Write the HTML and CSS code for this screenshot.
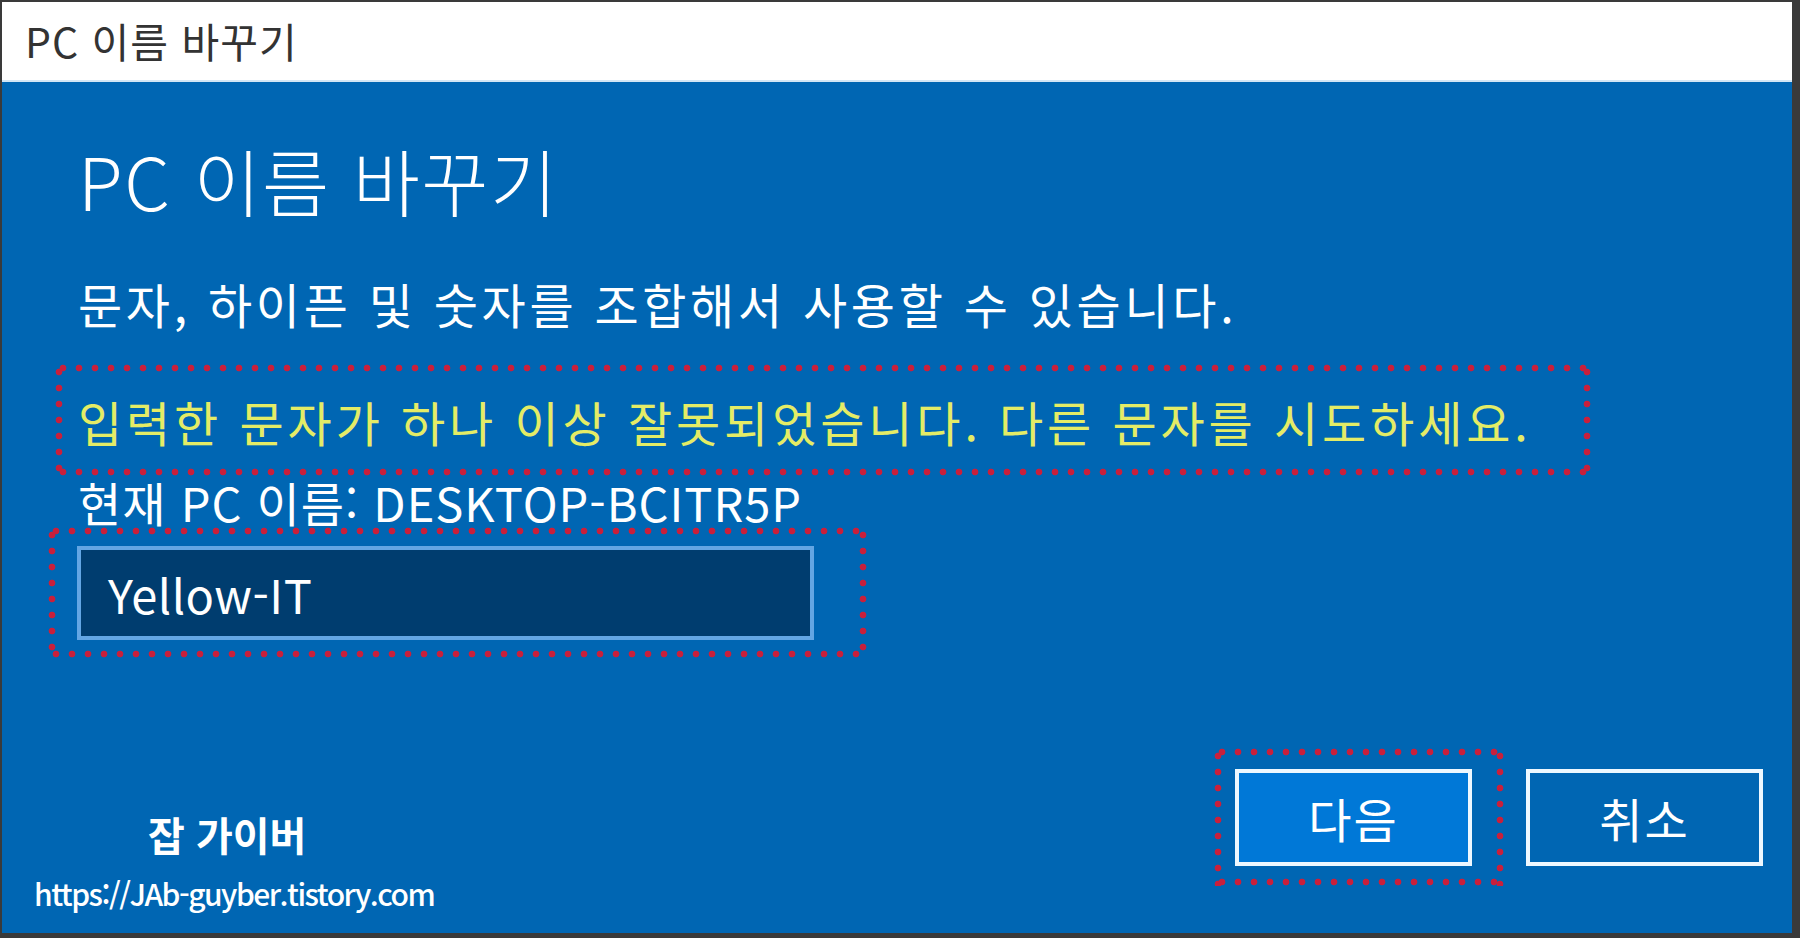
FILE: index.html
```html
<!DOCTYPE html>
<html lang="ko">
<head>
<meta charset="utf-8">
<title>PC 이름 바꾸기</title>
<link rel="stylesheet" href="styles.css">
</head>
<body>
<div class="window">
  <div class="titlebar">PC 이름 바꾸기</div>
  <div class="content">
    <h1 class="heading">PC 이름 바꾸기</h1>
    <p class="desc">문자, 하이픈 및 숫자를 조합해서 사용할 수 있습니다.</p>
    <div class="error mark">입력한 문자가 하나 이상 잘못되었습니다. 다른 문자를 시도하세요.</div>
    <p class="current">현재 PC 이름: DESKTOP-BCITR5P</p>
    <div class="input-frame mark">
      <div class="input">Yellow-IT</div>
    </div>
    <div class="footer">
      <div class="watermark">
        <div class="wm-name">잡 가이버</div>
        <div class="wm-url">https://JAb-guyber.tistory.com</div>
      </div>
      <div class="actions">
        <div class="btn-frame mark">
          <button class="btn primary">다음</button>
        </div>
        <button class="btn">취소</button>
      </div>
    </div>
  </div>
</div>
</body>
</html>
```

FILE: styles.css
```css
* { box-sizing: border-box; margin: 0; padding: 0; }
html, body { width: 1800px; height: 938px; overflow: hidden; }
body {
  background: #3a3a3a;
  font-family: "Noto Sans CJK KR", "Noto Sans", sans-serif;
  padding: 2px 8px 5px 2px;
}
.window {
  width: 1790px;
  height: 931px;
  background: #0066b3;
  display: flex;
  flex-direction: column;
}
.titlebar {
  height: 80px;
  flex: none;
  background: #fff;
  border-bottom: 2px solid #d3e6f5;
  padding: 18px 0 0 23px;
  font-size: 41px;
  line-height: 1;
  color: #333;
  letter-spacing: 1px;
}
.content {
  flex: 1;
  padding: 61px 29px 0 76px;
  color: #fff;
  display: flex;
  flex-direction: column;
  align-items: flex-start;
}
.heading {
  font-size: 73px;
  font-weight: 300;
  line-height: 1;
  letter-spacing: 1.5px;
}
.desc {
  font-size: 48px;
  line-height: 1;
  margin-top: 63px;
  letter-spacing: 3.7px;
}
.mark {
  background:
    radial-gradient(circle at center, #c8203c 0 3px, transparent 3.7px) 0 0 / 16px 8px repeat-x,
    radial-gradient(circle at center, #c8203c 0 3px, transparent 3.7px) 0 100% / 16px 8px repeat-x,
    radial-gradient(circle at center, #c8203c 0 3px, transparent 3.7px) 0 0 / 8px 16px repeat-y,
    radial-gradient(circle at center, #c8203c 0 3px, transparent 3.7px) 100% 0 / 8px 16px repeat-y;
}
.error {
  margin: 37px 0 0 -23px;
  width: 1536px;
  height: 112px;
  padding: 33px 0 0 23px;
  color: #e4ec66;
  font-size: 48px;
  line-height: 1;
  letter-spacing: 3.9px;
}
.current {
  margin-top: 2px;
  font-size: 47px;
  line-height: 1;
  letter-spacing: 1px;
}
.input-frame {
  margin: 2px 0 0 -30px;
  width: 819px;
  height: 131px;
  padding: 19px 0 0 29px;
}
.input {
  width: 737px;
  height: 94px;
  border: 4px solid #63a6e4;
  background: #003d6f;
  padding-left: 27px;
  font-size: 47px;
  letter-spacing: 0.5px;
  display: flex;
  align-items: center;
}
.footer {
  width: 100%;
  margin-top: 90px;
  display: flex;
  justify-content: space-between;
  align-items: flex-start;
}
.watermark {
  margin: 66px 0 0 -44px;
}
.wm-name {
  padding-left: 114px;
  font-size: 40px;
  font-weight: 700;
  line-height: 1;
}
.wm-url {
  margin-top: 24px;
  font-size: 30px;
  font-weight: 500;
  line-height: 1;
  letter-spacing: -1.5px;
}
.actions {
  display: flex;
  align-items: flex-start;
}
.btn-frame {
  width: 290px;
  height: 138px;
  padding: 21px 0 0 21px;
}
.btn {
  width: 237px;
  height: 97px;
  border: 4px solid #eef8ff;
  background: transparent;
  color: #fff;
  font-family: inherit;
  font-size: 47px;
  line-height: 1;
  display: flex;
  align-items: center;
  justify-content: center;
  letter-spacing: 2px;
}
.btn.primary { background: #0078d7; }
.actions > .btn { margin: 21px 0 0 22px; }
```
